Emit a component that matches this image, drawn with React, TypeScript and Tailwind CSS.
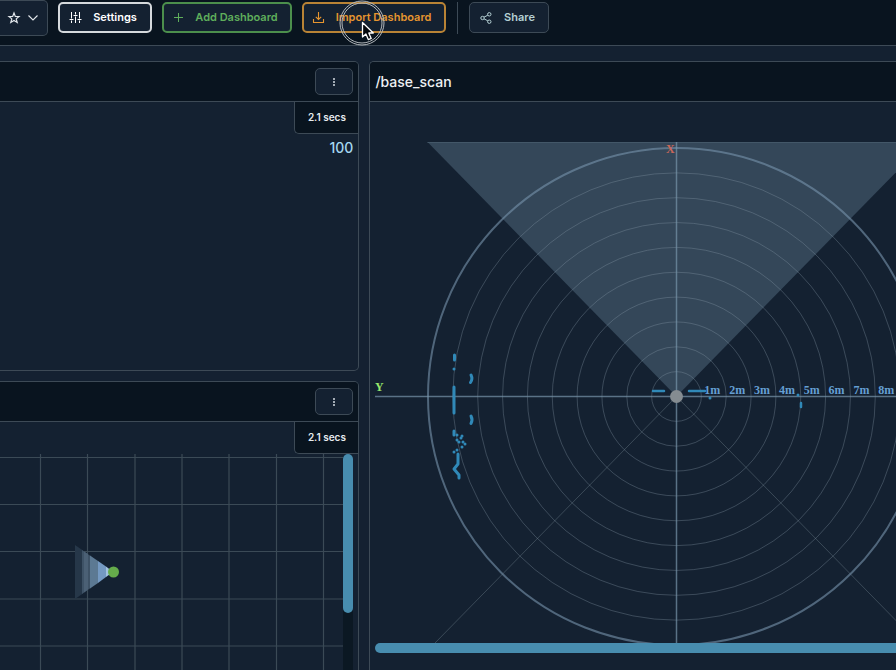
import { ReactNode } from "react";

interface ToolbarButtonProps {
  label: string;
  icon: ReactNode;
  className: string;
  children?: ReactNode;
}

const RING_STEP = 24.85;
const CENTER_X = 301.5;
const CENTER_Y = 254.5;

const rings = [1, 2, 3, 4, 5, 6, 7, 8, 9];
const rangeLabels = [1, 2, 3, 4, 5, 6, 7, 8];
const gridColumns = [40.5, 87.5, 135, 182, 229, 276.5, 323.5];
const gridRows = [3.5, 50.5, 97.5, 145, 192];

const scanDots = [
  [79, 227],
  [82, 293],
  [87, 294],
  [86, 296],
  [82, 298],
  [84, 300],
  [88, 300],
  [90, 302],
  [87, 305],
  [82, 308],
  [79, 310],
  [335, 256],
  [423, 253],
];

function StarIcon() {
  return (
    <svg width="14" height="14" viewBox="0 0 14 14" fill="none" stroke="currentColor" strokeWidth="1.2" strokeLinejoin="miter">
      <path d="M7 1.900 8.300 5.500 12 5.600 9.200 7.900 10.200 11.500 7 9.500 3.800 11.500 4.800 7.900 2 5.600 5.700 5.500Z" />
    </svg>
  );
}

function ChevronIcon() {
  return (
    <svg width="10" height="6" viewBox="0 0 10 6" fill="none" stroke="currentColor" strokeWidth="1.1">
      <path d="M.5.5 5 5 9.500.5" />
    </svg>
  );
}

function SlidersIcon() {
  return (
    <svg width="13" height="13" viewBox="0 0 13 13" fill="none" stroke="currentColor" strokeWidth="1">
      <path d="M2.500 1v6.500M2.500 9.500v2.500M.5 8.500h4M6.500 1v2.500M6.500 5.500v6.500M4.500 4.500h4M10.500 1v6.500M10.500 9.500v2.500M8.500 8.500h4" />
    </svg>
  );
}

function PlusIcon() {
  return (
    <svg width="9" height="9" viewBox="0 0 9 9" fill="none" stroke="currentColor" strokeWidth="1">
      <path d="M4.500 0v9M0 4.500h9" />
    </svg>
  );
}

function ImportIcon() {
  return (
    <svg width="13" height="13" viewBox="0 0 13 13" fill="none" stroke="currentColor" strokeWidth="1.1">
      <path d="M6.500 1v7.500M3.800 5.800l2.700 2.700 2.700-2.700M1.500 8v3.500h10V8" />
    </svg>
  );
}

function ShareIcon() {
  return (
    <svg width="12" height="12" viewBox="0 0 12 12" fill="none" stroke="currentColor" strokeWidth="1">
      <circle cx="2.500" cy="6" r="1.700" />
      <circle cx="9.300" cy="2.300" r="1.700" />
      <circle cx="9.300" cy="9.700" r="1.700" />
      <path d="m4 5.200 3.800-2M4 6.800l3.800 2" />
    </svg>
  );
}

function Pointer() {
  return (
    <svg
      className="pointer-events-none absolute -top-1 left-[35px]"
      width="46"
      height="46"
      viewBox="0 0 46 46"
      fill="none"
      aria-hidden="true"
    >
      <circle cx="23" cy="23" r="22" stroke="#b3b8bc" strokeWidth="1" />
      <circle cx="23" cy="23" r="20" stroke="#b3b8bc" strokeWidth="1" />
      <path
        d="M23.500 22.500v14.500l3.400-3 2.400 5.600 2.900-1.200-2.400-5.400h4.500Z"
        fill="#05090e"
        stroke="#fff"
        strokeWidth="1.300"
        strokeLinejoin="round"
      />
    </svg>
  );
}

function ToolbarButton({ label, icon, className, children }: ToolbarButtonProps) {
  return (
    <button
      type="button"
      className={`relative flex h-[31px] shrink-0 items-center rounded-[5px] bg-[#142131] text-[11px] font-semibold whitespace-nowrap ${className}`}
    >
      <span className="flex w-4 justify-center">{icon}</span>
      <span className="flex-1 text-center">{label}</span>
      {children}
    </button>
  );
}

function PanelMenu() {
  return (
    <button
      type="button"
      aria-label="Panel menu"
      className="flex h-[27px] w-[38px] items-center justify-center rounded-[5px] border border-[#3d4a56] bg-[#142131]"
    >
      <svg width="2" height="8" viewBox="0 0 2 8" fill="#d3dae0">
        <circle cx="1" cy="1" r="1" />
        <circle cx="1" cy="4" r="1" />
        <circle cx="1" cy="7" r="1" />
      </svg>
    </button>
  );
}

function AgeBadge() {
  return (
    <div className="flex h-8 w-16 shrink-0 items-center justify-center self-end rounded-bl-[5px] border-b border-l border-[#3d4a56] bg-[#09141f] text-[10px] font-semibold text-[#e6ebef]">
      2.1 secs
    </div>
  );
}

function LeftPanel({ children }: { children: ReactNode }) {
  return (
    <section className="flex h-[310px] shrink-0 flex-col overflow-hidden rounded-r-[5px] border border-l-0 border-[#3d4a56]">
      <header className="flex h-10 shrink-0 items-center justify-end border-b border-[#3d4a56] bg-[#09141f] pr-[5px]">
        <PanelMenu />
      </header>
      <AgeBadge />
      {children}
    </section>
  );
}

function PoseGrid() {
  return (
    <svg className="h-full min-w-0 flex-1" role="img" aria-label="Robot position">
      <g stroke="#3b4a56" strokeWidth="1.200">
        {gridColumns.map((x) => (
          <line key={x} x1={x} x2={x} y1="0" y2="100%" />
        ))}
        {gridRows.map((y) => (
          <line key={y} x1="0" x2="100%" y1={y} y2={y} />
        ))}
      </g>
      <path d="M75 91v54l8-5.500V96.500Z" fill="#263749" />
      <path d="M82 96v44l8.500-6V102Z" fill="#3e5266" />
      <path d="M84 97.500v41l4-3v-35.500Z" fill="#4b6075" />
      <path d="M90 101.500v33l8-5.500v-22Z" fill="#5c7993" />
      <path d="M98 107v22l8-6v-10.500Z" fill="#7499c2" />
      <path d="M106 112.500v10.500l7-5Z" fill="#a3c3df" />
      <circle cx="113.500" cy="118" r="5.500" fill="#65ac4b" />
    </svg>
  );
}

function LaserScan() {
  return (
    <svg
      className="block shrink-0"
      width="603"
      height="501"
      viewBox="0 0 603 501"
      fill="none"
      role="img"
      aria-label="Laser scan"
    >
      {/* Field of view */}
      <path d="M52.500 0h498L301.500 254.500Z" fill="#344759" />
      <path d="M60 501 301.500 254.500 543 501" stroke="#3a4957" />
      <path d="M52.500 .5h498" stroke="#435768" />

      {/* Range rings */}
      {rings.map((ring) => (
        <circle
          key={ring}
          cx={CENTER_X}
          cy={CENTER_Y}
          r={ring * RING_STEP}
          stroke="#8c9eae"
          strokeOpacity=".33"
        />
      ))}
      <circle cx={CENTER_X} cy={CENTER_Y} r="248.500" stroke="#7894ad" strokeOpacity=".6" strokeWidth="2" />

      {/* Axes */}
      <path d="M301.500 0v501M0 254.500h603" stroke="#7795ab" strokeOpacity=".7" strokeWidth="1.500" />
      <g fontFamily="Liberation Serif, serif" fontSize="12" fontWeight="700">
        <text x="291" y="11" fill="#c9685a">X</text>
        <text x="0" y="249" fill="#98e86c">Y</text>
        {rangeLabels.map((label) => (
          <text key={label} x={CENTER_X + label * RING_STEP + 3} y="252" fill="#659fd3">
            {label}m
          </text>
        ))}
      </g>

      {/* Readings */}
      <g stroke="#3089b8" strokeWidth="3" strokeLinecap="round" strokeLinejoin="round">
        <path d="M79.500 213v5M79 245v26M79 289v4M96 233q2 4-.5 7.500M96 274q2 4 0 7.500" />
        <path d="M83 312v10l-4 5 5 6v3" />
        <path d="M278 249h11M314 249h16M426 261v4" strokeWidth="2.500" />
      </g>
      {scanDots.map(([x, y]) => (
        <circle key={`${x}-${y}`} cx={x} cy={y} r="1.500" fill="#3089b8" />
      ))}

      <circle cx={CENTER_X} cy={CENTER_Y} r="6.500" fill="#858c91" />
    </svg>
  );
}

export default function App() {
  return (
    <div className="flex h-screen flex-col overflow-hidden bg-[#142131] font-['Inter',sans-serif] text-[#e6ebef]">
      <header className="flex h-[46px] shrink-0 items-center border-b border-[#3d4a56] bg-[#09141f] pb-[10px]">
        <div className="flex h-9 w-12 shrink-0 items-center rounded-r-[5px] border border-l-0 border-[#3d4a56] bg-[#142131] text-[#e3e8ec]">
          <button type="button" aria-label="Favorite" className="ml-[7px]">
            <StarIcon />
          </button>
          <button type="button" aria-label="Favorites list" className="ml-[7px]">
            <ChevronIcon />
          </button>
        </div>
        <div className="ml-[10px] flex items-center gap-[10px]">
          <ToolbarButton
            label="Settings"
            icon={<SlidersIcon />}
            className="w-[94px] border-2 border-[#d5d9dc] pr-[3px] pl-[7px] text-white"
          />
          <ToolbarButton
            label="Add Dashboard"
            icon={<PlusIcon />}
            className="w-[130px] border-2 border-[#4c8f4c] pr-[3px] pl-[6px] text-[#5fae5b]"
          />
          <ToolbarButton
            label="Import Dashboard"
            icon={<ImportIcon />}
            className="w-[144px] border-2 border-[#b98335] pr-[3px] pl-[6px] text-[#e6952f]"
          >
            <Pointer />
          </ToolbarButton>
        </div>
        <div className="mx-[11px] h-8 w-px bg-[#3d4a56]" />
        <ToolbarButton
          label="Share"
          icon={<ShareIcon />}
          className="w-20 border border-[#3d4a56] pr-[3px] pl-[8px] text-[#b5d0d4]"
        />
      </header>

      <main className="flex min-h-0 flex-1 gap-[10px] pt-[15px]">
        <div className="flex w-[calc(40%+1px)] shrink-0 flex-col gap-[10px]">
          <LeftPanel>
            <p className="pt-1 pr-[5px] text-right text-[14px] leading-5 font-medium text-[#a5d8f0]">
              100
            </p>
          </LeftPanel>
          <LeftPanel>
            <div className="flex min-h-0 flex-1 pr-[5px]">
              <PoseGrid />
              <div className="w-[10px] shrink-0 rounded-full bg-[#0b1823]">
                <div className="h-[159px] rounded-full bg-[#488daf]" />
              </div>
            </div>
          </LeftPanel>
        </div>

        <section className="flex min-w-0 flex-1 flex-col overflow-hidden rounded-tl-[5px] border-t border-l border-[#3d4a56]">
          <header className="flex h-10 shrink-0 items-center border-b border-[#3d4a56] bg-[#09141f] px-[5px]">
            <h2 className="text-[14px] font-medium text-[#eef1f3]">/base_scan</h2>
          </header>
          <div className="overflow-hidden pt-10 pl-[5px]">
            <LaserScan />
            <div className="h-[10px] rounded-l-full bg-[#488daf]" />
          </div>
        </section>
      </main>
    </div>
  );
}
